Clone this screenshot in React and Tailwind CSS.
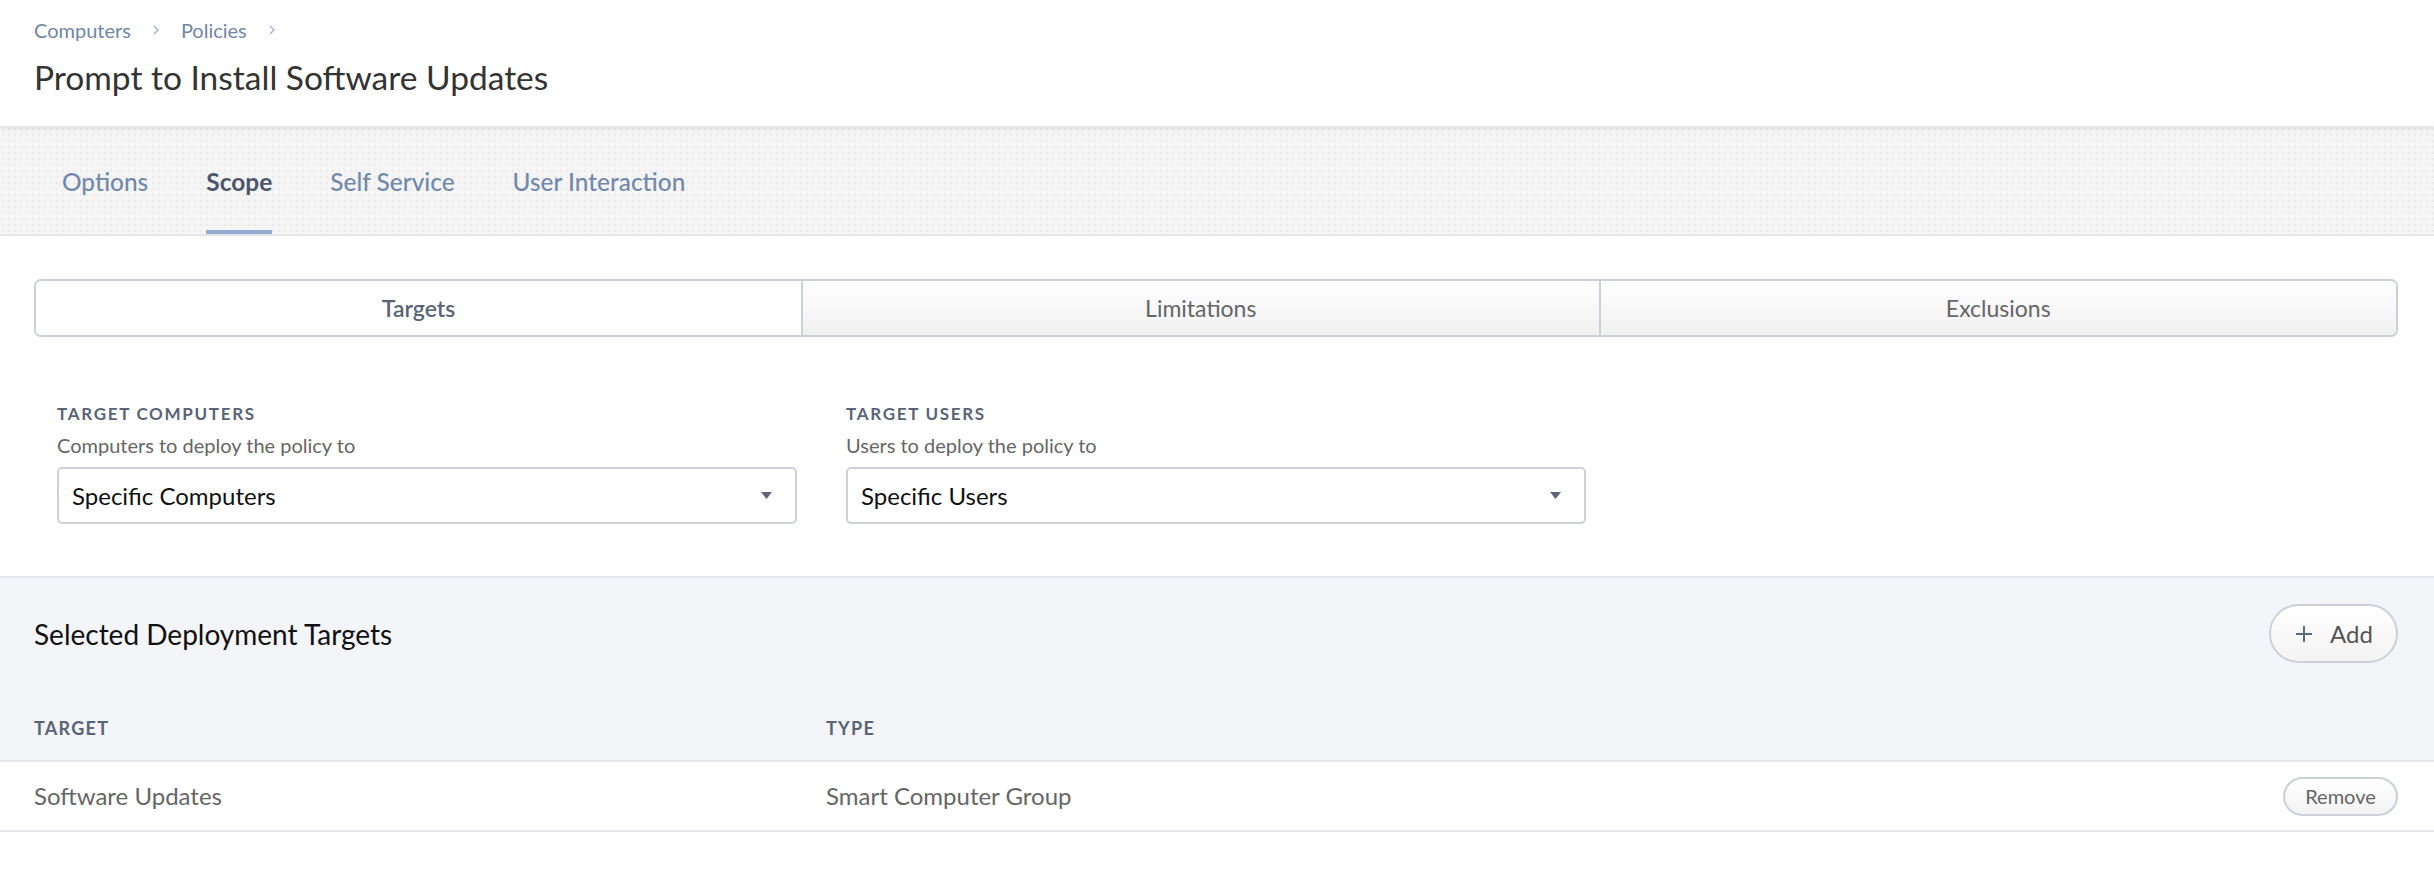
import React, { useState } from 'react';

const font = { fontFamily: 'Lato, "Noto Sans", sans-serif' };

function Chevron() {
  return (
    <svg width="10" height="14" viewBox="0 0 10 14" className="mx-[20px]">
      <path d="M3 3l4 4-4 4" fill="none" stroke="#a3b0c4" strokeWidth="1.3" />
    </svg>
  );
}

function Caret() {
  return (
    <svg width="13" height="9" viewBox="0 0 13 9">
      <path d="M1 1h11L6.5 8z" fill="#5b6478" />
    </svg>
  );
}

function SelectField({ label, help, value }) {
  return (
    <div className="w-[740px]">
      <div className="text-[17px] font-bold tracking-[0.1em] text-[#5a6478] uppercase leading-none">
        {label}
      </div>
      <div className="mt-[13px] text-[20px] text-[#666] leading-none">{help}</div>
      <div className="mt-[12px] h-[57px] border-2 border-[#cdd1d8] rounded-[5px] flex items-center justify-between pl-[13px] pr-[22px] bg-white">
        <span className="text-[24px] text-[#111]">{value}</span>
        <Caret />
      </div>
    </div>
  );
}

export default function App() {
  const [tab, setTab] = useState('Scope');
  const [seg, setSeg] = useState('Targets');
  const tabs = ['Options', 'Scope', 'Self Service', 'User Interaction'];
  const segs = ['Targets', 'Limitations', 'Exclusions'];

  return (
    <div className="min-h-screen bg-white" style={font}>
      {/* Header */}
      <div className="relative z-10 h-[126px] bg-white px-[34px] pt-[17px] shadow-[0_2px_6px_rgba(0,0,0,0.10)]">
        <div className="flex items-center text-[20px] text-[#6f86aa] leading-none h-[26px]">
          <span>Computers</span>
          <Chevron />
          <span>Policies</span>
          <Chevron />
        </div>
        <h1 className="mt-[18px] text-[33.5px] text-[#333] leading-none">
          Prompt to Install Software Updates
        </h1>
      </div>

      {/* Tabs */}
      <div className="h-[110px] border-b-2 border-[#e6e6e6] bg-[#f5f5f5] bg-[radial-gradient(circle,#ebebeb_1.2px,transparent_1.6px)] bg-[length:6px_6px] px-[62px] flex items-end gap-[58px]">
        {tabs.map((t) => (
          <button
            key={t}
            onClick={() => setTab(t)}
            className={`h-full flex items-center pt-[8px] border-b-4 ${
              tab === t
                ? 'border-[#94acd3] text-[#4c566b] font-bold text-[24.5px]'
                : 'border-transparent text-[#7189ad] font-medium text-[24.4px]'
            }`}
          >
            {t}
          </button>
        ))}
      </div>

      {/* Segmented */}
      <div className="px-[34px] pt-[43px] pr-[36px]">
        <div className="flex h-[58px] border-2 border-[#cbd0d9] rounded-[7px] overflow-hidden">
          {segs.map((s, i) => (
            <button
              key={s}
              onClick={() => setSeg(s)}
              className={`flex items-center justify-center text-[23px] ${
                i === 0 ? 'w-[765px]' : 'flex-1 border-l-2 border-[#cbd0d9]'
              } ${
                seg === s
                  ? 'bg-white text-[#5b6478] font-semibold'
                  : 'bg-gradient-to-b from-white to-[#f1f1f1] text-[#666]'
              }`}
            >
              {s}
            </button>
          ))}
        </div>
      </div>

      {/* Fields */}
      <div className="px-[57px] pt-[68px] pb-[52px] flex gap-[49px]">
        <SelectField label="Target Computers" help="Computers to deploy the policy to" value="Specific Computers" />
        <SelectField label="Target Users" help="Users to deploy the policy to" value="Specific Users" />
      </div>

      {/* Selected targets */}
      <div className="bg-[#f4f5f9] border-t-2 border-b-2 border-[#e6e8ee]">
        <div className="flex items-center justify-between pl-[34px] pr-[36px] pt-[26px]">
          <h2 className="text-[28px] text-[#111]">Selected Deployment Targets</h2>
          <button className="h-[59px] w-[129px] rounded-full border-2 border-[#cbd0d9] bg-gradient-to-b from-white to-[#f3f3f3] flex items-center justify-center gap-[16px] text-[24px] text-[#555]">
            <svg width="20" height="20" viewBox="0 0 20 20">
              <path d="M10 2v16M2 10h16" stroke="#5b6b85" strokeWidth="2" />
            </svg>
            <span>Add</span>
          </button>
        </div>
        <div className="flex pl-[34px] pt-[56px] pb-[23px] text-[18px] font-bold tracking-[0.07em] text-[#5a6478] leading-none">
          <div className="w-[792px]">TARGET</div>
          <div>TYPE</div>
        </div>
      </div>

      <div className="h-[70px] flex items-center pl-[34px] pr-[36px] border-b-2 border-[#e6e8ee] text-[24px] text-[#666]">
        <div className="w-[792px]">Software Updates</div>
        <div className="flex-1">Smart Computer Group</div>
        <button className="h-[39px] w-[115px] rounded-full border-2 border-[#cbd0d9] bg-gradient-to-b from-white to-[#f3f3f3] text-[20px] text-[#666]">
          Remove
        </button>
      </div>
    </div>
  );
}
